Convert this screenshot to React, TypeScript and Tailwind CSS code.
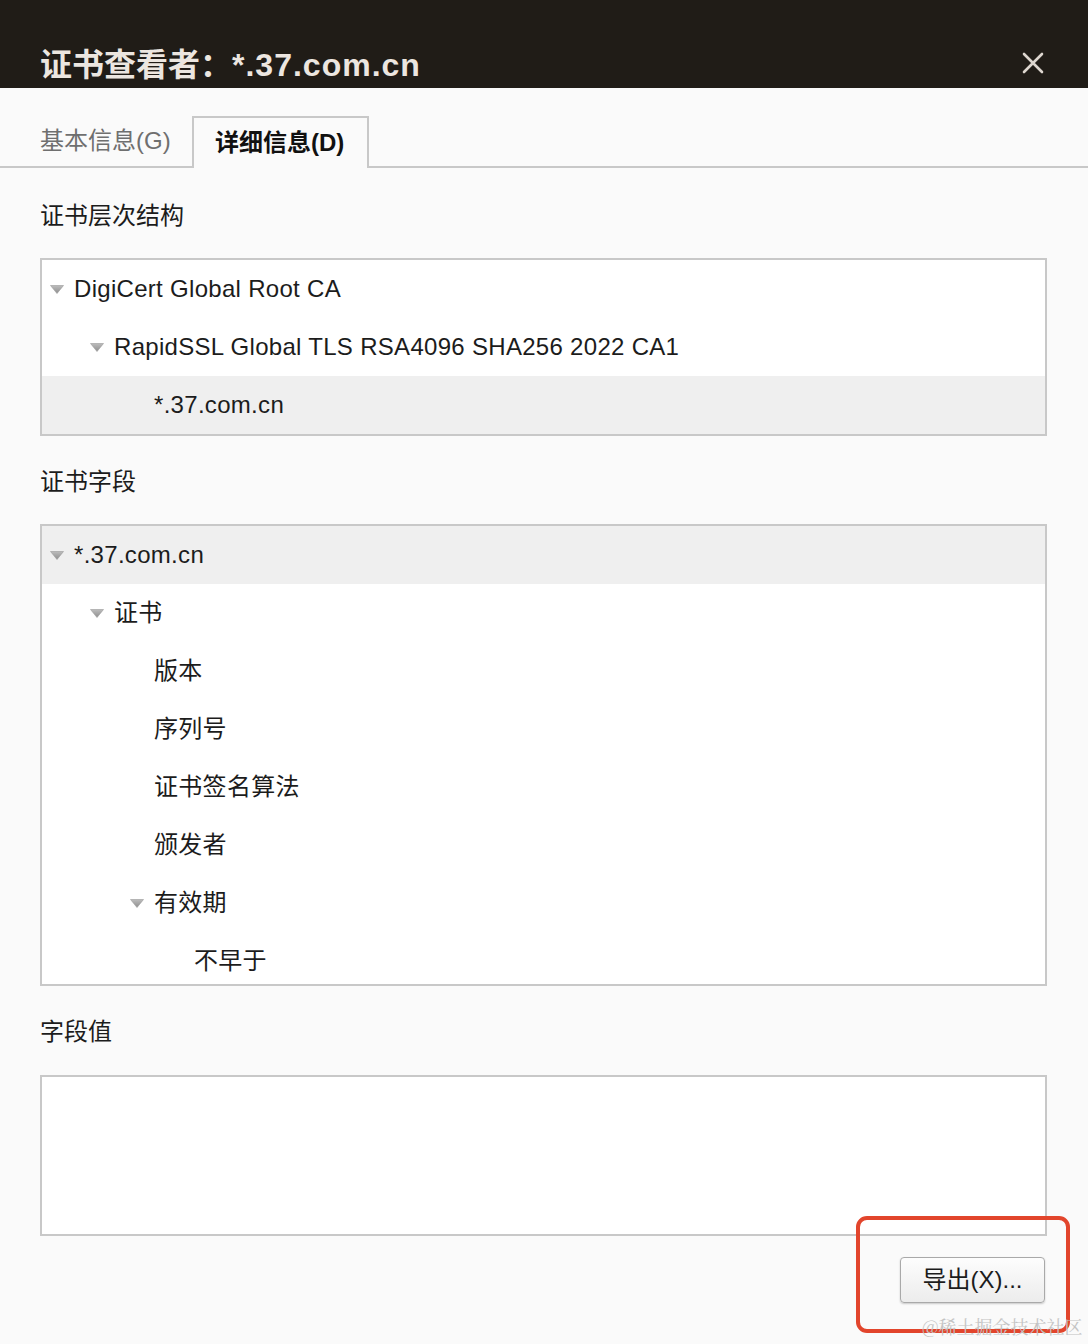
import React from 'react';

const font = { fontFamily: '"Liberation Sans", "Noto Sans CJK SC", sans-serif' };

type Row = { label: string; level: number; open?: boolean; selected?: boolean };

const hierarchy: Row[] = [
  { label: 'DigiCert Global Root CA', level: 0, open: true },
  { label: 'RapidSSL Global TLS RSA4096 SHA256 2022 CA1', level: 1, open: true },
  { label: '*.37.com.cn', level: 2, selected: true },
];

const fields: Row[] = [
  { label: '*.37.com.cn', level: 0, open: true, selected: true },
  { label: '证书', level: 1, open: true },
  { label: '版本', level: 2 },
  { label: '序列号', level: 2 },
  { label: '证书签名算法', level: 2 },
  { label: '颁发者', level: 2 },
  { label: '有效期', level: 2, open: true },
  { label: '不早于', level: 3 },
];

const Twisty = () => (
  <svg width="14" height="9" viewBox="0 0 14 9" className="shrink-0">
    <defs>
      <linearGradient id="tw" x1="0" y1="0" x2="0" y2="1">
        <stop offset="0" stopColor="#bcbcbc" />
        <stop offset="1" stopColor="#8e8e8e" />
      </linearGradient>
    </defs>
    <path d="M0.5 0.5 H13.5 L7 8.5 Z" fill="url(#tw)" stroke="#9a9a9a" strokeWidth="0.6" />
  </svg>
);

const TreeRow = ({ row }: { row: Row }) => (
  <div
    className={`flex h-[58px] items-center shrink-0 ${row.selected ? 'bg-[#efefef]' : ''}`}
    style={{ paddingLeft: 8 + row.level * 40 }}
  >
    <div className="w-[24px] shrink-0 flex items-center">{row.open && <Twisty />}</div>
    <span className="text-[24px] tracking-[0.3px] text-[#1c1c1c] whitespace-nowrap">{row.label}</span>
  </div>
);

const Label = ({ children, className }: { children: React.ReactNode; className: string }) => (
  <div className={`text-[24px] leading-[32px] text-[#1c1c1c] ${className}`}>{children}</div>
);

export default function App() {
  return (
    <div className="relative w-[1088px] h-[1344px] bg-[#fafafa] overflow-hidden" style={font}>
      {/* title bar */}
      <div className="h-[88px] bg-[#201c17] flex justify-between overflow-hidden">
        <div className="pl-[40px] pt-[44px] text-[32px] leading-[42px] font-bold text-[#ece6e0] whitespace-nowrap">
          证书查看者：<span className="tracking-[1px]">*.37.com.cn</span>
        </div>
        <div className="pr-[44px] pt-[52px]">
          <svg width="22" height="22" viewBox="0 0 22 22">
            <path d="M2 2 L20 20 M20 2 L2 20" stroke="#ddd6cf" strokeWidth="2.6" strokeLinecap="round" />
          </svg>
        </div>
      </div>

      {/* tabs */}
      <div className="mt-[28px] h-[52px] flex items-end border-b-2 border-[#c8c8c8]">
        <div className="h-[50px] w-[192px] pl-[40px] flex items-center text-[24px] text-[#6f6f6f]">基本信息(G)</div>
        <div className="h-[52px] w-[177px] -mb-[2px] border-2 border-b-0 border-[#c8c8c8] bg-[#fafafa] flex items-center pl-[21px] text-[24px] font-bold text-[#111]">
          详细信息(D)
        </div>
      </div>

      <div className="pl-[40px] pr-[41px]">
        <Label className="mt-[32px]">证书层次结构</Label>
        <div className="mt-[26px] border-2 border-[#c8c8c8] bg-white flex flex-col">
          {hierarchy.map((r, i) => (
            <TreeRow key={i} row={r} />
          ))}
        </div>

        <Label className="mt-[30px]">证书字段</Label>
        <div className="mt-[26px] h-[462px] border-2 border-[#c8c8c8] bg-white flex flex-col overflow-hidden">
          {fields.map((r, i) => (
            <TreeRow key={i} row={r} />
          ))}
        </div>

        <Label className="mt-[30px]">字段值</Label>
        <div className="mt-[27px] h-[161px] border-2 border-[#c8c8c8] bg-white" />

        <div className="mt-[21px] flex justify-end pr-[2px]">
          <button className="h-[46px] w-[145px] rounded-[4px] border border-[#a9a9a9] bg-gradient-to-b from-[#fdfdfd] to-[#ececec] shadow-[0_1px_2px_rgba(0,0,0,0.2)] text-[24px] text-[#1c1c1c]">
            导出(X)...
          </button>
        </div>
      </div>

      {/* annotation overlay */}
      <div className="absolute left-[856px] top-[1216px] w-[214px] h-[117px] border-4 border-[#e2452c] rounded-[11px]" />
      <div className="absolute left-[922px] top-[1313px] text-[18px] text-[#c4c4c4] whitespace-nowrap" style={{ fontFamily: '"Noto Serif CJK SC", "Noto Sans CJK SC", serif' }}>
        @稀土掘金技术社区
      </div>
    </div>
  );
}
